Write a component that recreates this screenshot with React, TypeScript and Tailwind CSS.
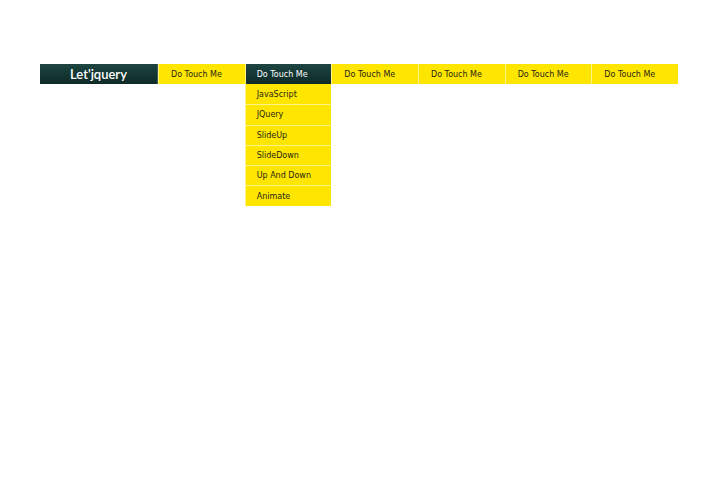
import React from "react";

const items = ["Do Touch Me", "Do Touch Me", "Do Touch Me", "Do Touch Me", "Do Touch Me", "Do Touch Me"];
const sub = ["JavaScript", "JQuery", "SlideUp", "SlideDown", "Up And Down", "Animate"];

export default function App() {
  return (
    <div className="w-[710px] h-[501px] bg-white pt-[64px] pl-[40px]" style={{ fontFamily: '"DejaVu Sans", Verdana, sans-serif' }}>
      <div className="flex w-[638px] h-[20px]">
        <div
          className="w-[118px] h-[20px] flex items-center justify-center pt-[1px] bg-gradient-to-b from-[#1d4541] to-[#0e2a27] text-white text-[13px] font-semibold border-r border-[#3c5c58]"
          style={{ fontFamily: 'Lato, sans-serif' }}
        >
          Let'jquery
        </div>
        {items.map((t, i) => (
          <div key={i} className="relative flex-1">
            <div
              className={
                i === 1
                  ? "h-[20px] flex items-center pt-[1px] pl-[11px] text-[8px] text-white bg-gradient-to-b from-[#1d4541] to-[#0e2a27] border-l border-[#fff38a]"
                  : "h-[20px] flex items-center pt-[1px] pl-[12px] text-[8px] text-[#1e1e10] bg-[#ffe600] border-l border-[#fff38a]"
              }
            >
              {t}
            </div>
            {i === 1 && (
              <div className="absolute left-0 top-[20px] w-full flex flex-col">
                {sub.map((s, j) => (
                  <div
                    key={j}
                    className={
                      "h-[20.3px] flex items-center pt-[1px] pl-[11px] text-[8px] text-[#1e1e10] bg-[#ffe600] border-l border-[#fff38a] " +
                      (j > 0 ? "border-t border-t-[#fff38a]" : "")
                    }
                  >
                    {s}
                  </div>
                ))}
              </div>
            )}
          </div>
        ))}
      </div>
    </div>
  );
}
